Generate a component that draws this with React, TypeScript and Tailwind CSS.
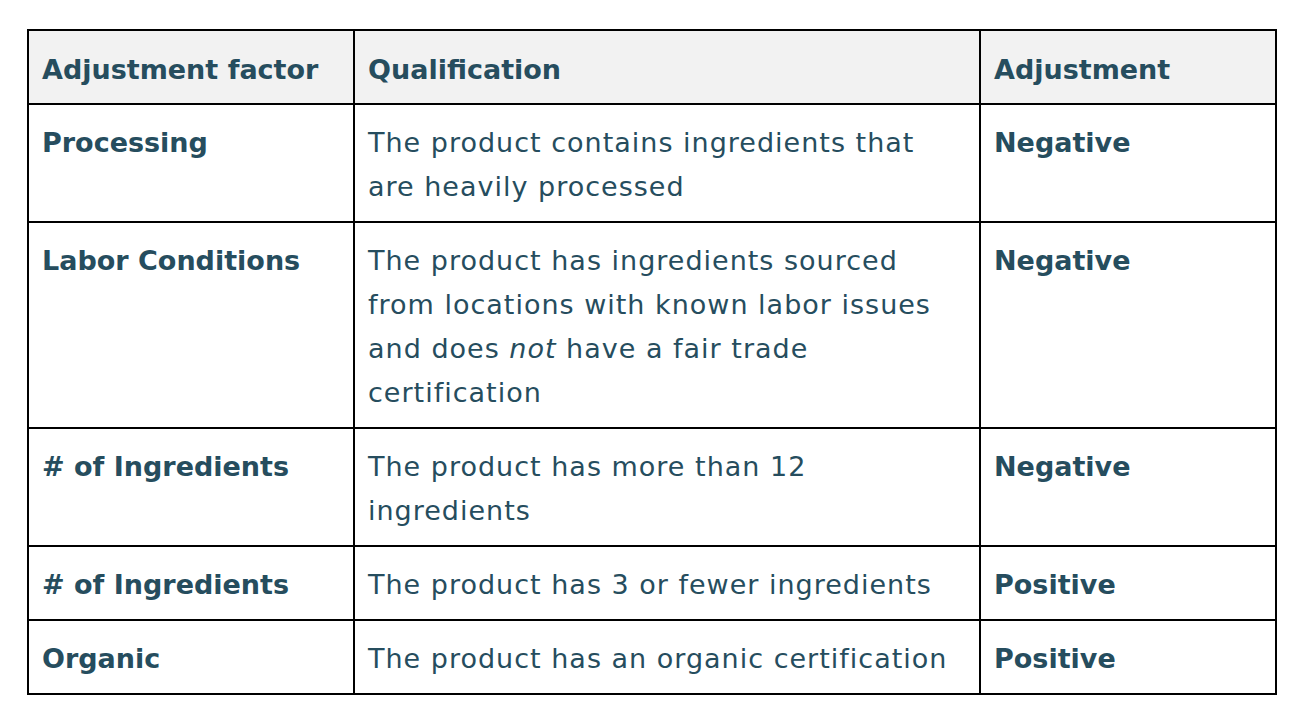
import React from "react";

const rows: { f: string; q: React.ReactNode; a: string }[] = [
  { f: "Processing", q: "The product contains ingredients that are heavily processed", a: "Negative" },
  {
    f: "Labor Conditions",
    q: (
      <>
        The product has ingredients sourced from locations with known labor issues and does <em>not</em> have a fair trade certification
      </>
    ),
    a: "Negative",
  },
  { f: "# of Ingredients", q: "The product has more than 12 ingredients", a: "Negative" },
  { f: "# of Ingredients", q: "The product has 3 or fewer ingredients", a: "Positive" },
  { f: "Organic", q: "The product has an organic certification", a: "Positive" },
];

export default function App() {
  return (
    <div className="w-[1302px] h-[716px] bg-white pt-[29px] pl-[27px]" style={{ fontFamily: '"DejaVu Sans", sans-serif' }}>
      <table className="border-collapse border-2 border-black w-[1248px] text-[#264d5e] text-[27px] leading-[44px] table-fixed">
        <colgroup>
          <col className="w-[326px]" />
          <col className="w-[626px]" />
          <col className="w-[296px]" />
        </colgroup>
        <thead>
          <tr className="bg-[#f2f2f2]">
            <th className="border-2 border-black text-left align-top px-[13px] pt-[17px] pb-[11px] font-bold">Adjustment factor</th>
            <th className="border-2 border-black text-left align-top px-[13px] pt-[17px] pb-[11px] font-bold">Qualification</th>
            <th className="border-2 border-black text-left align-top px-[13px] pt-[17px] pb-[11px] font-bold">Adjustment</th>
          </tr>
        </thead>
        <tbody>
          {rows.map((r, i) => (
            <tr key={i}>
              <td className="border-2 border-black align-top px-[13px] pt-[16px] pb-[12px] font-bold">{r.f}</td>
              <td className="border-2 border-black align-top pl-[13px] pr-[10px] pt-[16px] pb-[12px] tracking-[1px]">{r.q}</td>
              <td className="border-2 border-black align-top px-[13px] pt-[16px] pb-[12px] font-bold">{r.a}</td>
            </tr>
          ))}
        </tbody>
      </table>
    </div>
  );
}
